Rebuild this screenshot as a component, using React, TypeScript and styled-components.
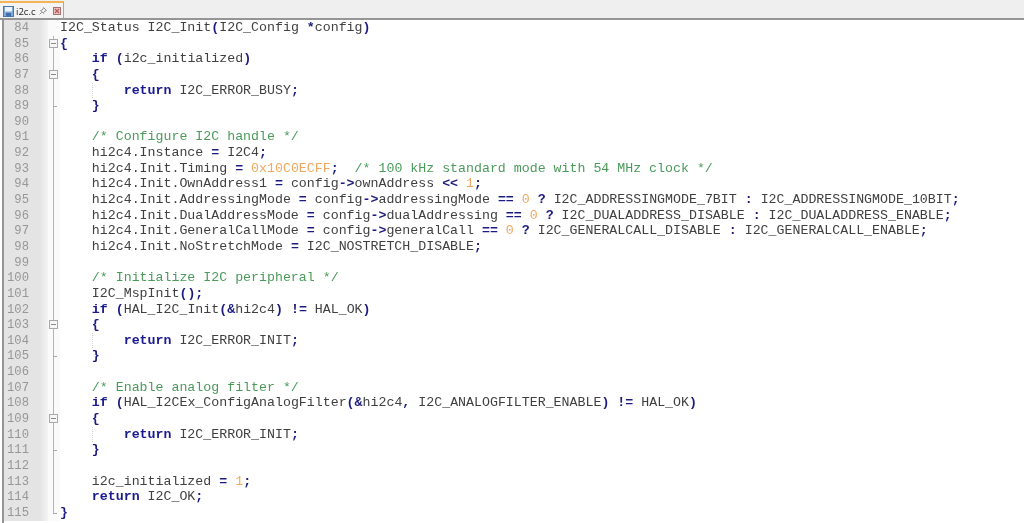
import styled, { createGlobalStyle } from "styled-components";

const GlobalStyle = createGlobalStyle`
    html, body {
        margin: 0;
        padding: 0;
        background: #ffffff;
        overflow: hidden;
    }
`;

type FoldKind = "none" | "open" | "line" | "tick" | "end";

const SOURCE: [string, FoldKind][] = [
    ["I2C_Status I2C_Init(I2C_Config *config)", "none"],
    ["{", "open"],
    ["    if (i2c_initialized)", "line"],
    ["    {", "open"],
    ["        return I2C_ERROR_BUSY;", "line"],
    ["    }", "tick"],
    ["", "line"],
    ["    /* Configure I2C handle */", "line"],
    ["    hi2c4.Instance = I2C4;", "line"],
    ["    hi2c4.Init.Timing = 0x10C0ECFF;  /* 100 kHz standard mode with 54 MHz clock */", "line"],
    ["    hi2c4.Init.OwnAddress1 = config->ownAddress << 1;", "line"],
    ["    hi2c4.Init.AddressingMode = config->addressingMode == 0 ? I2C_ADDRESSINGMODE_7BIT : I2C_ADDRESSINGMODE_10BIT;", "line"],
    ["    hi2c4.Init.DualAddressMode = config->dualAddressing == 0 ? I2C_DUALADDRESS_DISABLE : I2C_DUALADDRESS_ENABLE;", "line"],
    ["    hi2c4.Init.GeneralCallMode = config->generalCall == 0 ? I2C_GENERALCALL_DISABLE : I2C_GENERALCALL_ENABLE;", "line"],
    ["    hi2c4.Init.NoStretchMode = I2C_NOSTRETCH_DISABLE;", "line"],
    ["", "line"],
    ["    /* Initialize I2C peripheral */", "line"],
    ["    I2C_MspInit();", "line"],
    ["    if (HAL_I2C_Init(&hi2c4) != HAL_OK)", "line"],
    ["    {", "open"],
    ["        return I2C_ERROR_INIT;", "line"],
    ["    }", "tick"],
    ["", "line"],
    ["    /* Enable analog filter */", "line"],
    ["    if (HAL_I2CEx_ConfigAnalogFilter(&hi2c4, I2C_ANALOGFILTER_ENABLE) != HAL_OK)", "line"],
    ["    {", "open"],
    ["        return I2C_ERROR_INIT;", "line"],
    ["    }", "tick"],
    ["", "line"],
    ["    i2c_initialized = 1;", "line"],
    ["    return I2C_OK;", "line"],
    ["}", "end"],
];

const TOKEN = /(\/\*.*?\*\/)|\b(if|return)\b|\b(0x[0-9A-F]+|\d+)\b|(->|==|!=|<<|[=?:;,(){}*&])/g;

type TokenKind = "plain" | "comment" | "keyword" | "number" | "op";

function tokenize(line: string) {
    const out: { kind: TokenKind; text: string }[] = [];
    let last = 0;
    for (const m of line.matchAll(TOKEN)) {
        const at = m.index ?? 0;
        if (at > last) out.push({ kind: "plain", text: line.slice(last, at) });
        const kind: TokenKind = m[1] ? "comment" : m[2] ? "keyword" : m[3] ? "number" : "op";
        out.push({ kind, text: m[0] });
        last = at + m[0].length;
    }
    if (last < line.length) out.push({ kind: "plain", text: line.slice(last) });
    return out;
}

function SaveIcon() {
    return (
        <svg width="11" height="11" viewBox="0 0 11 11">
            <rect x="0.5" y="0.5" width="10" height="10" fill="#7fa8d8" stroke="#4a78b0" />
            <rect x="2" y="1" width="7" height="4.5" fill="#eef4fb" />
            <rect x="3" y="7" width="5" height="3.5" fill="#3f6fa8" />
        </svg>
    );
}

function PinIcon() {
    return (
        <svg width="8" height="8" viewBox="0 0 8 8">
            <path d="M4.6 0.6 L7.4 3.4 L6 4 L4.8 5.4 L4.6 6.4 L1.6 3.4 L2.8 3.2 L4 2 Z M2.8 5.2 L0.5 7.5" fill="none" stroke="#808080" strokeWidth="0.9" />
        </svg>
    );
}

function CloseIcon() {
    return (
        <svg width="8" height="8" viewBox="0 0 8 8">
            <rect x="0.5" y="0.5" width="7" height="7" fill="#eec4c4" stroke="#a87070" />
            <path d="M2 2 L6 6 M6 2 L2 6" stroke="#b85858" strokeWidth="1.2" />
        </svg>
    );
}

export default function App() {
    return (
        <Page>
            <GlobalStyle />
            <TabBar>
                <Tab>
                    <SaveIcon />
                    <TabLabel>i2c.c</TabLabel>
                    <PinIcon />
                    <CloseIcon />
                </Tab>
            </TabBar>
            <Editor>
                {SOURCE.map(([text, fold], i) => (
                    <Row key={i}>
                        <LineNumber>{84 + i}</LineNumber>
                        <FoldCell $kind={fold} />
                        <Code $guide={text.startsWith("        ")}>
                            {tokenize(text).map((t, j) => (
                                <Tok key={j} $kind={t.kind}>
                                    {t.text}
                                </Tok>
                            ))}
                        </Code>
                    </Row>
                ))}
            </Editor>
        </Page>
    );
}

const Page = styled.div`
    width: 1024px;
    height: 523px;
    overflow: hidden;
    display: flex;
    flex-direction: column;
    background: #ffffff;
    filter: blur(0.45px);
`;

const TabBar = styled.div`
    height: 18px;
    flex: none;
    background: #efefef;
    border-bottom: 2px solid #959595;
    display: flex;
    align-items: flex-end;
`;

const Tab = styled.div`
    width: 64px;
    height: 17px;
    box-sizing: border-box;
    border-top: 2px solid #f3b456;
    border-right: 1px solid #a8a8a8;
    background: #f4f4f4;
    display: flex;
    align-items: center;
    padding: 1px 0 0 3px;

    svg:last-child {
        margin-left: 6px;
    }
`;

const TabLabel = styled.span`
    font-family: "Open Sans", "Liberation Sans", sans-serif;
    font-size: 9.5px;
    color: #222222;
    width: 18px;
    margin: 0 5px 0 2px;
`;

const Editor = styled.div`
    flex: 1;
    border-left: 2px solid #959595;
    margin-left: 2px;
    display: flex;
    flex-direction: column;
`;

const Row = styled.div`
    height: 15.65px;
    flex: none;
    display: flex;
    font-family: "Liberation Mono", monospace;
    font-size: 13.27px;
    line-height: 15.65px;
    white-space: pre;
`;

const LineNumber = styled.div`
    width: 44px;
    flex: none;
    box-sizing: border-box;
    padding: 1px 19px 0 0;
    text-align: right;
    font-size: 12.2px;
    background: linear-gradient(90deg, #e4e4e4 0, #e4e4e4 36px, #f4f4f4 44px);
    color: #979797;
`;

const FoldCell = styled.div<{ $kind: FoldKind }>`
    width: 12px;
    flex: none;
    position: relative;
    background: #fafafa;

    &::before {
        content: "";
        display: ${(p) => (p.$kind === "none" ? "none" : "block")};
        position: absolute;
        left: 5px;
        width: 1px;
        top: 0;
        height: ${(p) => (p.$kind === "end" ? "9px" : "100%")};
        background: #b4b4b4;
    }

    &::after {
        content: "";
        display: ${(p) => (p.$kind === "open" || p.$kind === "tick" || p.$kind === "end" ? "block" : "none")};
        position: absolute;
        box-sizing: border-box;
        left: ${(p) => (p.$kind === "open" ? "1px" : "5px")};
        top: ${(p) => (p.$kind === "open" ? "3px" : "8px")};
        width: ${(p) => (p.$kind === "open" ? "9px" : "4px")};
        height: ${(p) => (p.$kind === "open" ? "9px" : "1px")};
        background: ${(p) =>
            p.$kind === "open"
                ? "linear-gradient(#8a8a8a, #8a8a8a) center / 5px 1px no-repeat #f6f6f6"
                : "#a8a8a8"};
        border: ${(p) => (p.$kind === "open" ? "1px solid #a8a8a8" : "none")};
    }
`;

const Code = styled.div<{ $guide: boolean }>`
    flex: 1;
    position: relative;

    &::before {
        content: "";
        display: ${(p) => (p.$guide ? "block" : "none")};
        position: absolute;
        left: 32px;
        top: 0;
        bottom: 0;
        border-left: 1px dotted #d4d4d4;
    }
`;

const TOK_COLORS: Record<TokenKind, string> = {
    plain: "#404040",
    comment: "#4a9a5a",
    keyword: "#1a1a90",
    number: "#f2a860",
    op: "#1a1a80",
};

const Tok = styled.span<{ $kind: TokenKind }>`
    color: ${(p) => TOK_COLORS[p.$kind]};
    font-weight: ${(p) => (p.$kind === "keyword" || p.$kind === "op" ? 700 : 400)};
`;
